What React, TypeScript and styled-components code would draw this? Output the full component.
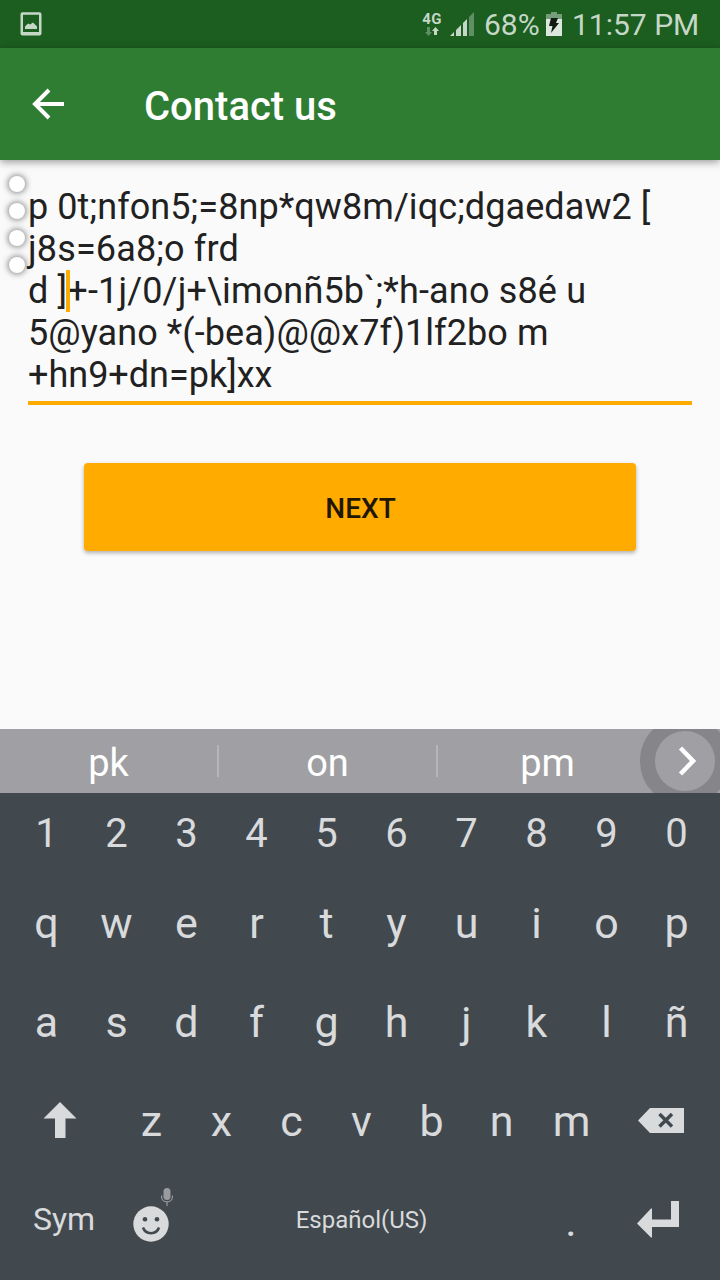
import React from "react";
import styled, { createGlobalStyle } from "styled-components";

const GlobalStyle = createGlobalStyle`
  * { box-sizing: border-box; }
  body { margin: 0; background: #fafafa; font-family: Roboto, "Liberation Sans", sans-serif; }
  svg { display: block; flex: none; }
`;

const Screen = styled.div`
  width: 720px;
  height: 1280px;
  display: flex;
  flex-direction: column;
  overflow: hidden;
  background: #fafafa;
`;

const StatusBar = styled.header`
  height: 48px;
  flex: none;
  display: flex;
  align-items: center;
  justify-content: space-between;
  padding: 0 22px 0 20px;
  background: #1b5e20;
  color: #c6d7c7;
  font-size: 30px;
`;

const StatusGroup = styled.div`
  display: flex;
  align-items: center;
  height: 48px;
`;

const Network = styled.div`
  display: flex;
  flex-direction: column;
  align-items: center;
  width: 20px;
  margin-right: 8px;
  gap: 1px;
  font-size: 15px;
  font-weight: 700;
  line-height: 14px;
  letter-spacing: 0.4px;
`;

const StatusText = styled.span<{ $width: number; $ml: number }>`
  width: ${(p) => p.$width}px;
  margin-left: ${(p) => p.$ml}px;
  padding-top: 2px;
  line-height: 48px;
  white-space: nowrap;
`;

const AppBar = styled.div`
  height: 112px;
  flex: none;
  display: flex;
  align-items: center;
  padding-left: 24px;
  background: #2e7d32;
  color: #fff;
  position: relative;
  box-shadow: 0 2px 8px rgba(0, 0, 0, 0.4);
`;

const Title = styled.h1`
  margin: 6px 0 0 72px;
  font-size: 40px;
  line-height: 48px;
  font-weight: 500;
`;

const Content = styled.main`
  flex: 1;
  display: flex;
  flex-direction: column;
  padding: 26px 28px 0;
  position: relative;
`;

const Handles = styled.div`
  position: absolute;
  left: 9px;
  top: 16px;
  display: flex;
  flex-direction: column;
  gap: 11px;
`;

const Handle = styled.i`
  width: 16px;
  height: 16px;
  border-radius: 50%;
  background: #fff;
  box-shadow: 0 0 6px 1px rgba(0, 0, 0, 0.5);
`;

const Field = styled.div`
  height: 219px;
  border-bottom: 4px solid #ffab00;
  color: #212121;
  font-size: 36px;
  line-height: 42px;
`;

const Line = styled.div<{ $track?: number }>`
  white-space: pre;
  letter-spacing: ${(p) => p.$track ?? 0}px;
`;

const Caret = styled.span`
  position: relative;
  &::after {
    content: "";
    position: absolute;
    left: -1px;
    top: 0;
    width: 4px;
    height: 42px;
    background: #ffab00;
  }
`;

const NextButton = styled.button`
  height: 88px;
  margin: 58px 56px 0;
  padding: 4px 0 0 1px;
  border: 0;
  border-radius: 4px;
  background: #ffab00;
  color: #211700;
  font: 500 28px/32px Roboto, sans-serif;
  box-shadow: 0 2px 4px rgba(0, 0, 0, 0.3);
`;

const Suggestions = styled.div`
  height: 64px;
  flex: none;
  display: flex;
  align-items: center;
  background: #a09fa3;
  position: relative;
  overflow: hidden;
`;

const Suggestion = styled.div<{ $last?: boolean }>`
  width: 219px;
  height: 32px;
  padding-top: 2px;
  line-height: 32px;
  text-align: center;
  font-size: 38px;
  color: #fff;
  border-right: ${(p) => (p.$last ? "0" : "2px solid #b6b5b7")};
`;

const Expand = styled.div`
  position: absolute;
  left: 640px;
  top: -13px;
  width: 90px;
  height: 90px;
  padding-left: 4px;
  border-radius: 50%;
  border: 15px solid #868589;
  display: flex;
  align-items: center;
  justify-content: center;
`;

const Keyboard = styled.div`
  height: 487px;
  flex: none;
  background: #41494f;
  color: #d9dadc;
`;

const KeyRow = styled.div<{ $height?: number; $pad?: number }>`
  display: flex;
  height: ${(p) => p.$height ?? 99}px;
  padding-left: ${(p) => p.$pad ?? 11}px;
`;

const Key = styled.div<{ $width?: number; $size?: number; $drop?: number; $lift?: number; $inset?: number }>`
  width: ${(p) => p.$width ?? 70}px;
  flex: none;
  display: flex;
  align-items: center;
  justify-content: center;
  padding: ${(p) => p.$drop ?? 0}px 0 ${(p) => p.$lift ?? 0}px ${(p) => p.$inset ?? 0}px;
  font-size: ${(p) => p.$size ?? 43}px;
  line-height: 50px;
`;

const EmojiKey = styled(Key)`
  position: relative;
`;

const MicHint = styled.div`
  position: absolute;
  left: 45px;
  top: 18px;
`;

const Letters = ({ keys, size, drop }: { keys: string; size?: number; drop?: number }) => (
  <>
    {keys.split("").map((k) => (
      <Key key={k} $size={size} $drop={drop} $inset={1}>{k}</Key>
    ))}
  </>
);

const PictureIcon = () => (
  <svg width="22" height="24" viewBox="0 0 22 24">
    <path fill="#c6d7c7" fillRule="evenodd" d="M2.500 .3H19.500Q21.500 .3 21.500 2.300V21.500Q21.500 23.500 19.500 23.500H2.500Q.5 23.500 .5 21.500V2.300Q.5 .3 2.500 .3ZM3 2.700V20H19V2.700Z" />
    <path fill="#c6d7c7" d="M5 17V14.500L8 11.400 10 12.400 13 10.400 17 14.400V17Z" />
  </svg>
);

const DataArrows = () => (
  <svg width="14" height="9" viewBox="0 0 14 9">
    <path fill="#5f8f63" d="M2 0H5V5H7L3.500 9 0 5H2Z" />
    <path fill="#c6d7c7" d="M9 8H12V4H14L10.500 0 7 4H9Z" />
  </svg>
);

const Signal = () => (
  <svg width="24" height="24" viewBox="0 0 24 24">
    <path fill="#c6d7c7" d="M0 24L4 20V24ZM6 18L11 13V24H6ZM13 11L17 7V24H13Z" />
    <path fill="#5f8f63" d="M19 5L24 0V24H19Z" />
  </svg>
);

const Battery = () => (
  <svg width="16" height="24" viewBox="0 0 16 24">
    <path fill="#769d79" d="M0 2H5V0H11V2H16V8H0Z" />
    <path fill="#dce7dd" d="M0 7H16V24H0Z" />
    <path fill="#121a13" d="M5 6H12L10 11H13L5 21 6.500 14H3Z" />
  </svg>
);

export default function App() {
  return (
    <>
      <GlobalStyle />
      <Screen>
        <StatusBar>
          <PictureIcon />
          <StatusGroup>
            <Network>4G<DataArrows /></Network>
            <Signal />
            <StatusText $width={62} $ml={10}>68%</StatusText>
            <Battery />
            <StatusText $width={126} $ml={10}>11:57 PM</StatusText>
          </StatusGroup>
        </StatusBar>
        <AppBar>
          <svg width="48" height="48" viewBox="0 0 48 48">
            <path d="M40 24H12M25 10L11 24L25 38" fill="none" stroke="#fff" strokeWidth="4" />
          </svg>
          <Title>Contact us</Title>
        </AppBar>
        <Content>
          <Handles><Handle /><Handle /><Handle /><Handle /></Handles>
          <Field>
            <Line $track={0.08}>p 0t;nfon5;=8np*qw8m/iqc;dgaedaw2 [</Line>
            <Line $track={0.15}>j8s=6a8;o frd</Line>
            <Line $track={0.17}>d ]<Caret />+-1j/0/j+\imonñ5b`;*h-ano s8é u</Line>
            <Line $track={0.07}>5@yano *(-bea)@@x7f)1lf2bo m</Line>
            <Line>+hn9+dn=pk]xx</Line>
          </Field>
          <NextButton>NEXT</NextButton>
        </Content>
        <Suggestions>
          <Suggestion>pk</Suggestion>
          <Suggestion>on</Suggestion>
          <Suggestion $last>pm</Suggestion>
          <Expand>
            <svg width="18" height="30" viewBox="0 0 18 30">
              <path d="M2.500 2L15 15L2.500 28" fill="none" stroke="#fff" strokeWidth="4.500" />
            </svg>
          </Expand>
        </Suggestions>
        <Keyboard>
          <KeyRow $height={80}><Letters keys="1234567890" size={40} drop={2} /></KeyRow>
          <KeyRow><Letters keys="qwertyuiop" /></KeyRow>
          <KeyRow><Letters keys="asdfghjklñ" /></KeyRow>
          <KeyRow $pad={4}>
            <Key $width={112} $lift={1}>
              <svg width="34" height="36" viewBox="0 0 34 36">
                <path fill="#d9dadc" d="M17 0L33.500 16.500H22.500V36H12V16.500H.5Z" />
              </svg>
            </Key>
            <Letters keys="zxcvbnm" />
            <Key $width={110}>
              <svg width="46" height="25" viewBox="0 0 46 25">
                <path fill="#d9dadc" d="M12 0H46V25H12L0 12.500Z" />
                <path d="M21.500 6L34 18.500M34 6L21.500 18.500" stroke="#41494f" strokeWidth="3.500" />
              </svg>
            </Key>
          </KeyRow>
          <KeyRow $pad={11}>
            <Key $width={105} $size={32} $lift={2} $inset={1}>Sym</Key>
            <EmojiKey $drop={8}>
              <svg width="36" height="36" viewBox="0 0 36 36">
                <circle cx="18" cy="18" r="17.700" fill="#d9dadc" />
                <circle cx="12" cy="13.300" r="2.300" fill="#41494f" />
                <circle cx="24" cy="13.300" r="2.300" fill="#41494f" />
                <path d="M10 21.500C12.500 29 23.500 29 26 21.500" fill="none" stroke="#41494f" strokeWidth="2.500" />
              </svg>
              <MicHint>
                <svg width="12" height="18" viewBox="0 0 12 18">
                  <rect x="2.500" y="0" width="7" height="12" rx="3.500" fill="#999c9f" />
                  <path d="M.6 7.500V9C.6 15.500 11.400 15.500 11.400 9V7.500M6 14V18" fill="none" stroke="#999c9f" strokeWidth="1.200" />
                </svg>
              </MicHint>
            </EmojiKey>
            <Key $width={350} $size={24} $inset={1}>Español(US)</Key>
            <Key $drop={3}>.</Key>
            <Key $width={104} $lift={2}>
              <svg width="42" height="38" viewBox="0 0 42 38">
                <path fill="#d9dadc" d="M34 1H42V27H15V37.500H14L0 23.500 14 8.500H15V19.500H34Z" />
              </svg>
            </Key>
          </KeyRow>
        </Keyboard>
      </Screen>
    </>
  );
}
